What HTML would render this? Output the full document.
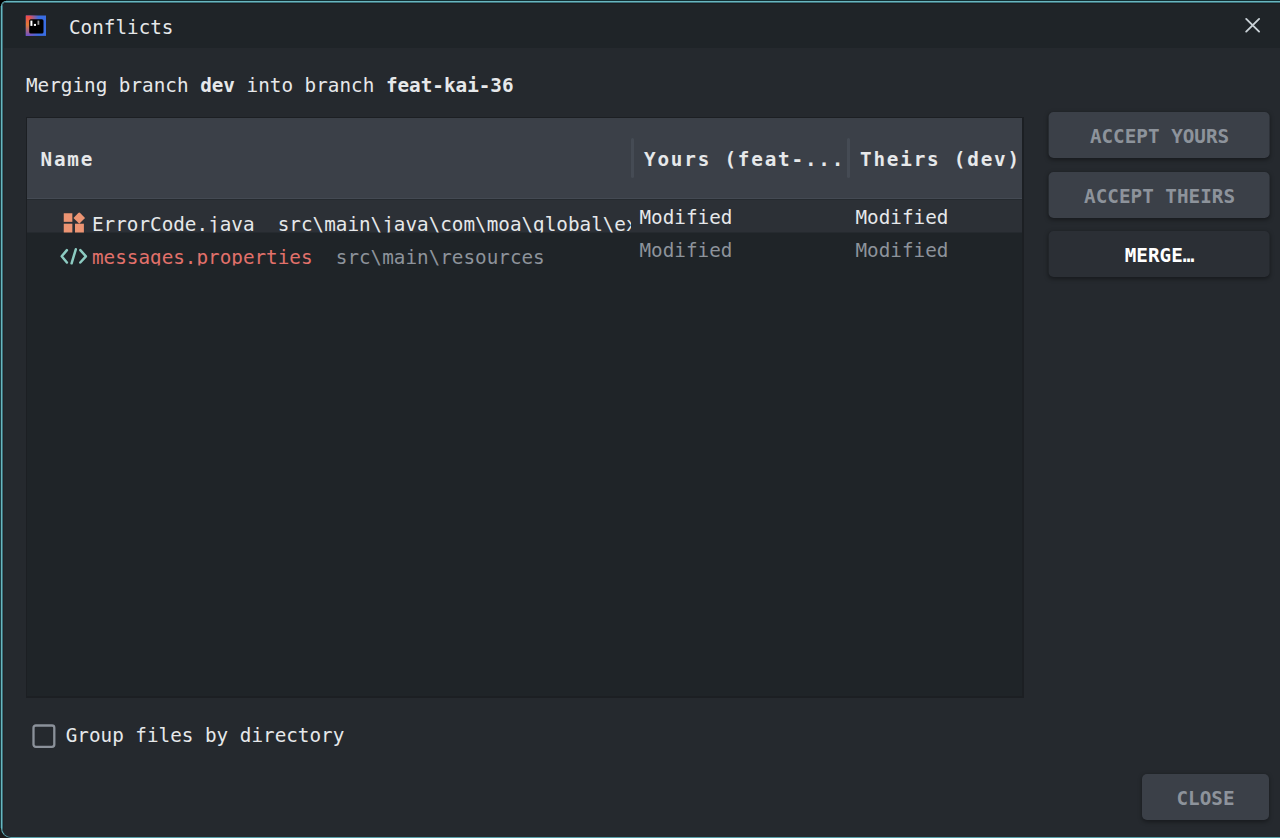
<!DOCTYPE html>
<html lang="en">
<head>
<meta charset="utf-8">
<title>Conflicts</title>
<style>
html,body{margin:0;padding:0;background:#1c3d42;}
body{width:1280px;height:838px;position:relative;overflow:hidden;font-family:"DejaVu Sans Mono","Liberation Mono",monospace;font-size:19.3px;color:#e6e8ea;}
#strip{position:absolute;left:0;top:0;width:1280px;height:1px;background:#123034;}
.corner{position:absolute;left:0;width:12px;height:12px;}
#frame{position:absolute;left:1px;top:1px;width:1290px;height:837px;box-sizing:border-box;border:1px solid #68b6c0;border-bottom-color:#58a0aa;border-radius:5px 0 0 10px;background:#25292e;overflow:hidden;}
#win{position:absolute;left:0;top:0;width:1290px;height:836px;box-sizing:border-box;border:1px solid #3d7078;border-bottom:none;border-radius:4px 0 0 9px;background:#25292e;overflow:hidden;}
#edgeT{left:0;top:0;width:100%;height:1px;background:#1a1d21;z-index:3;}
#edgeL{left:0;top:0;width:1px;height:100%;background:#212328;z-index:3;}
#win>*,#table>*,#thead>*,.row>*,.cell>*{position:absolute;}
#titlebar{left:0;top:0;width:100%;height:45px;background:#1f2428;}
.t{white-space:pre;line-height:24px;height:24px;}
#table{left:23px;top:114px;width:995px;height:578px;background:#1f2428;border:1px solid #1c1f23;border-right-width:2px;border-bottom-width:2px;}
#thead{left:0;top:0;width:995px;height:80px;background:#3b4048;border-bottom:1px solid #444a53;}
.h{font-weight:bold;letter-spacing:1.8px;top:30px;}
.sep{top:20px;width:3px;height:40px;border-radius:1.5px;background:#454b54;}
.row{left:0;width:995px;height:33px;overflow:hidden;transform:translateY(.5px);}
.cell{top:0;height:33px;overflow:hidden;}
.dim{color:#8d939b;}
.btn{left:1045px;width:220.6px;transform:translateX(.6px);height:46px;border-radius:5px;background:#3b4048;color:#8d939b;font-weight:bold;text-align:center;line-height:50px;text-indent:1.3px;box-shadow:0 1.5px 4px rgba(0,0,0,.38);}
</style>
</head>
<body>
<div id="strip"></div>
<div class="corner" style="top:0;width:6px;height:6px;background:#000;"></div>
<div class="corner" style="bottom:0;width:10px;height:10px;background:#1b1b1b;"></div>
<div id="frame">
<div id="win">
  <div id="edgeT"></div><div id="edgeL"></div>
  <div id="titlebar"></div>
  <svg style="left:22px;top:12px;" width="22" height="22" viewBox="0 0 22 22">
    <defs>
      <linearGradient id="gv" x1="0" y1="0" x2="0" y2="1"><stop offset="0" stop-color="#ee4650"/><stop offset=".45" stop-color="#e27a36"/><stop offset="1" stop-color="#7050c8"/></linearGradient>
      <linearGradient id="gh" x1="0" y1="0" x2="1" y2="0"><stop offset="0" stop-color="#fff"/><stop offset=".2" stop-color="#fff"/><stop offset=".62" stop-color="#000"/></linearGradient>
      <mask id="mk"><rect x="0" y="0" width="22" height="22" fill="url(#gh)"/></mask>
    </defs>
    <rect x=".8" y=".5" width="20.2" height="20.4" fill="#3a6de2"/>
    <rect x=".8" y=".5" width="20.2" height="20.4" fill="url(#gv)" mask="url(#mk)"/>
    <rect x="4.2" y="4.2" width="14.3" height="14.3" rx="1.6" fill="#000"/>
    <rect x="5.4" y="5.6" width="2" height="5.3" fill="#fff"/>
    <rect x="8.9" y="8.9" width="2.1" height="2" fill="#fff"/>
    <rect x="12.5" y="5.6" width="1.8" height="4.2" fill="#9a9a9a"/>
  </svg>
  <svg style="left:1240px;top:13px;" width="20" height="20" viewBox="0 0 20 20"><path d="M3.2 2.9 L16.1 15.6 M16.1 2.9 L3.2 15.6" stroke="#c9d1d6" stroke-width="1.9" stroke-linecap="round" fill="none"/></svg>
  <div class="t" style="left:66px;top:13px;transform:translateY(-.5px);">Conflicts</div>
  <div class="t" style="left:23px;top:71px;transform:translateY(-.5px);">Merging branch <b>dev</b> into branch <b>feat-kai-36</b></div>
  <div id="table">
    <div id="thead">
      <div class="t h" style="left:13.5px;">Name</div>
      <div class="sep" style="left:604px;"></div>
      <div class="t h" style="left:617px;">Yours (feat-...</div>
      <div class="sep" style="left:820px;"></div>
      <div class="t h" style="left:833px;">Theirs (dev)</div>
    </div>
    <div class="row" style="top:81px;background:#2c3036;">
      <div class="cell" style="left:0;width:604px;">
        <svg style="left:36px;top:13px;" width="24" height="22" viewBox="0 0 24 22" fill="#ec9473"><rect x=".75" y=".75" width="8.6" height="8.6"/><rect x=".75" y="11.2" width="8.6" height="9.4"/><rect x="12" y="11.2" width="8.9" height="9.4"/><path d="M16.25 -.4 L22.05 5.4 L16.25 11.2 L10.45 5.4 Z"/></svg>
        <div class="t" style="left:65px;top:13px;">ErrorCode.java  src\main\java\com\moa\global\exception</div>
      </div>
      <div class="t" style="left:612.5px;top:6px;">Modified</div>
      <div class="t" style="left:828.5px;top:6px;">Modified</div>
    </div>
    <div class="row" style="top:114px;">
      <div class="cell" style="left:0;width:604px;">
        <svg style="left:32px;top:14px;" width="30" height="20" viewBox="0 0 30 20" fill="none" stroke="#8ccbc1" stroke-width="2.5" stroke-linecap="round" stroke-linejoin="round"><path d="M7.9 3.6 L2.7 9.8 L7.9 16 M16.8 2.8 L12.6 16.8 M21.3 3.6 L26.9 9.8 L21.3 16"/></svg>
        <div class="t" style="left:65px;top:13px;color:#e2716b;">messages.properties<span class="dim">  src\main\resources</span></div>
      </div>
      <div class="t dim" style="left:612.5px;top:6px;">Modified</div>
      <div class="t dim" style="left:828.5px;top:6px;">Modified</div>
    </div>
  </div>
  <div class="btn" style="top:109px;">ACCEPT YOURS</div>
  <div class="btn" style="top:169px;">ACCEPT THEIRS</div>
  <div class="btn" style="top:228px;background:#2b2f35;color:#fff;">MERGE…</div>
  <svg style="left:28px;top:720px;" width="26" height="26" viewBox="0 0 26 26"><rect x="2.5" y="2.5" width="20.8" height="21.3" rx="2.3" fill="none" stroke="#8b919a" stroke-width="2.3"/></svg>
  <div class="t" style="left:63px;top:722px;transform:translate(-.3px,-.6px);">Group files by directory</div>
  <div class="btn" style="left:1139px;width:127px;top:771px;text-indent:0;transform:none;">CLOSE</div>
</div>
</div>
</body>
</html>
